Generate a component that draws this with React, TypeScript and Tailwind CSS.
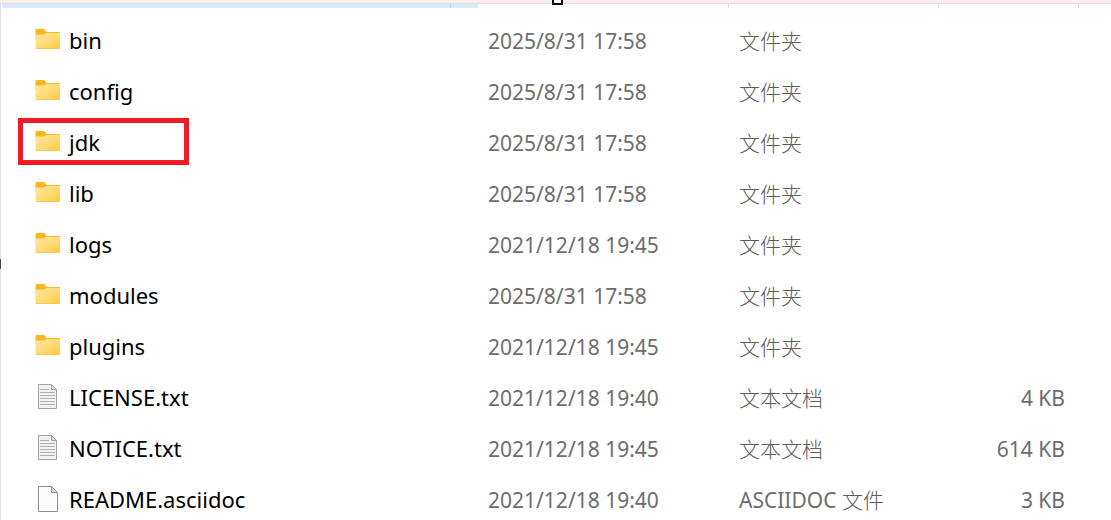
type Entry = {
  name: string;
  modified: string;
  format?: string;
  type: string;
  size?: string;
  icon: 'folder' | 'text' | 'blank';
  marked?: boolean;
};

const entries: Entry[] = [
  { name: 'bin', modified: '2025/8/31 17:58', type: '文件夹', icon: 'folder' },
  { name: 'config', modified: '2025/8/31 17:58', type: '文件夹', icon: 'folder' },
  { name: 'jdk', modified: '2025/8/31 17:58', type: '文件夹', icon: 'folder', marked: true },
  { name: 'lib', modified: '2025/8/31 17:58', type: '文件夹', icon: 'folder' },
  { name: 'logs', modified: '2021/12/18 19:45', type: '文件夹', icon: 'folder' },
  { name: 'modules', modified: '2025/8/31 17:58', type: '文件夹', icon: 'folder' },
  { name: 'plugins', modified: '2021/12/18 19:45', type: '文件夹', icon: 'folder' },
  { name: 'LICENSE.txt', modified: '2021/12/18 19:40', type: '文本文档', size: '4 KB', icon: 'text' },
  { name: 'NOTICE.txt', modified: '2021/12/18 19:45', type: '文本文档', size: '614 KB', icon: 'text' },
  { name: 'README.asciidoc', modified: '2021/12/18 19:40', format: 'ASCIIDOC', type: '文件', size: '3 KB', icon: 'blank' },
];

function FolderIcon() {
  return (
    <svg className="mb-1 size-7 shrink-0" viewBox="0 0 28 28" aria-hidden="true">
      <defs>
        <linearGradient id="folder" x1="0" y1="0" x2="1" y2="1">
          <stop offset="0" stopColor="#ffe9a6" />
          <stop offset="0.5" stopColor="#ffdb78" />
          <stop offset="1" stopColor="#ffc83c" />
        </linearGradient>
      </defs>
      <path d="M1.5 5Q1.5 4 2.5 4H9.5Q10.5 4 11.2 5L12.6 7H25Q26 7 26 8V14H1.5Z" fill="#f9b71c" />
      <path d="M1.5 9.5H9.3Q10.3 9.5 11 9L12 8.3Q12.5 8 13.2 8H26V22.7Q26 23.8 25 23.8H2.5Q1.5 23.8 1.5 22.7Z" fill="url(#folder)" />
      <path d="M2 23.5H25.5" stroke="#efbd4a" strokeWidth="0.7" />
    </svg>
  );
}

function TextIcon() {
  return (
    <svg className="mb-1 size-7 shrink-0" viewBox="0 0 28 28" aria-hidden="true">
      <path d="M4.5 2.5H17.5L22.5 7.5V26.5H4.5Z" fill="#f2f2f2" stroke="#a3a3a3" />
      <path d="M17.5 2.5V7.5H22.5Z" fill="#dcdcdc" stroke="#a3a3a3" />
      <path d="M6 7.5H15M6 10.5H21M6 13.5H21M6 16.5H21M6 19.5H21M6 22.5H21" stroke="#b0b0b0" />
    </svg>
  );
}

function BlankIcon() {
  return (
    <svg className="mb-1 size-7 shrink-0" viewBox="0 0 28 28" aria-hidden="true">
      <path d="M4.5 2.5H17.5L23.5 8.5V27.5H4.5Z" fill="#fafafa" stroke="#8f8f8f" />
      <path d="M17.5 2.5V8.5H23.5Z" fill="#e8e8e8" stroke="#8f8f8f" />
    </svg>
  );
}

const icons = {
  folder: FolderIcon,
  text: TextIcon,
  blank: BlankIcon,
};

function Row({ entry }: { entry: Entry }) {
  const Icon = icons[entry.icon];

  return (
    <tr className="h-[51px]">
      <td className="relative pl-[33px] text-[22px] leading-7 text-black">
        <div className="flex items-center gap-[7px]">
          <Icon />
          <span className="pb-0.5">{entry.name}</span>
        </div>
        {/* red highlight frame */}
        {entry.marked && (
          <div className="absolute top-px left-[17px] h-[47px] w-[171px] border-5 border-[#ed1c24]" />
        )}
      </td>
      <td className="pl-2.5">{entry.modified}</td>
      <td className="pl-2.5">
        {entry.format && `${entry.format} `}
        <span className="font-light text-[#5c5c5c]">{entry.type}</span>
      </td>
      <td className="pr-3.5 text-right">{entry.size}</td>
      <td />
    </tr>
  );
}

export default function App() {
  return (
    <div className="relative h-screen overflow-hidden bg-white font-['Noto_Sans','Noto_Sans_CJK_SC',sans-serif] text-[21px] leading-7 text-[#6d6d6d]">
      {/* bottom edge of the toolbar */}
      <div className="h-1 border-b border-[#e9dedd] bg-[#f8efeb]" />
      <div className="absolute -top-1 left-[552px] h-[9px] w-[11px] border-2 border-black bg-white" />

      <div className="flex">
        <div className="w-px shrink-0 bg-[#e6dfe2]">
          <div className="mt-[255px] h-2.5 bg-[#4a4a4a]" />
        </div>

        <table className="w-full table-fixed border-collapse whitespace-nowrap">
          <colgroup>
            <col />
            <col className="w-[251px]" />
            <col className="w-[210px]" />
            <col className="w-[140px]" />
            <col className="w-8" />
          </colgroup>
          <thead>
            <tr>
              <th className="p-0 pb-[7px]" aria-label="名称">
                <div className="ml-px h-1 bg-[#d9ebf9] pr-[27px]">
                  <div className="ml-auto h-1 w-px bg-[#b9cfe0]" />
                </div>
              </th>
              <th className="p-0 pb-[7px]" aria-label="修改日期">
                <div className="ml-auto h-1 w-px bg-[#e0e0e0]" />
              </th>
              <th className="p-0 pb-[7px]" aria-label="类型">
                <div className="ml-auto h-1 w-px bg-[#e0e0e0]" />
              </th>
              <th className="p-0 pb-[7px]" aria-label="大小">
                <div className="ml-auto h-1 w-px bg-[#e0e0e0]" />
              </th>
              <th className="p-0 pb-[7px]" />
            </tr>
          </thead>
          <tbody>
            {entries.map((entry) => (
              <Row key={entry.name} entry={entry} />
            ))}
          </tbody>
        </table>
      </div>
    </div>
  );
}
